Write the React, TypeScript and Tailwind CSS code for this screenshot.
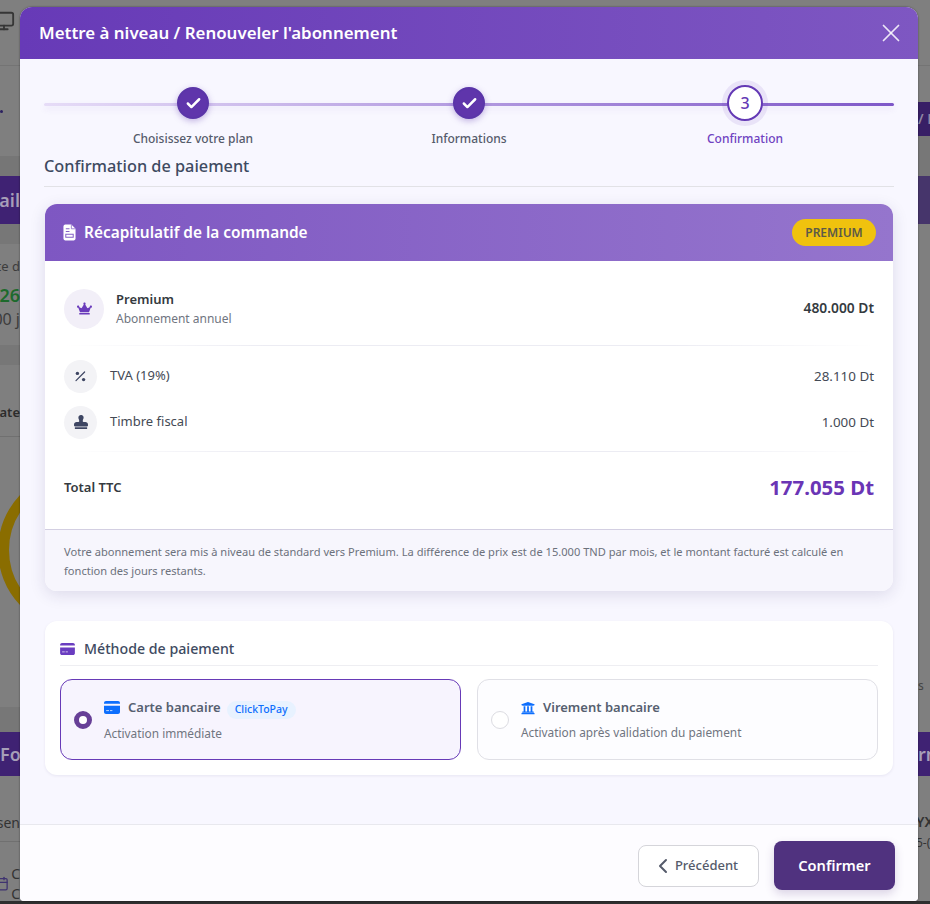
import { Check, ChevronLeft, Monitor, Calendar, X } from 'lucide-react';
import { FaCrown, FaStamp, FaUniversity } from 'react-icons/fa';

const font = "font-['Noto_Sans','Open_Sans',sans-serif]";

function DocIcon() {
  return (
    <svg width="13" height="17" viewBox="0 0 14 18" fill="none">
      <path d="M2.5 0.5H9L13.5 5V15.5C13.5 16.6 12.6 17.5 11.5 17.5H2.5C1.4 17.5 0.5 16.6 0.5 15.5V2.5C0.5 1.4 1.4 0.5 2.5 0.5Z" fill="#fff" />
      <path d="M3 5H7M3 8H7M3 11H11V14H3V11Z" stroke="#8460c6" strokeWidth="1.1" />
      <path d="M9 0.5V5H13.5" stroke="#8460c6" strokeWidth="0.8" />
    </svg>
  );
}

function CardIcon({ className, w, h }: { className: string; w: number; h: number }) {
  return (
    <svg width={w} height={h} viewBox="0 0 16 13" className={className}>
      <path d="M2 0H14C15.1 0 16 .9 16 2V2.8H0V2C0 .9.9 0 2 0Z" fill="currentColor" />
      <path d="M0 4.8H16V11C16 12.1 15.1 13 14 13H2C.9 13 0 12.1 0 11V4.8Z" fill="currentColor" />
      <path d="M2.2 9.6H5M6 9.6H8.4" stroke="#fff" strokeOpacity="0.8" strokeWidth="0.9" />
    </svg>
  );
}

function PercentIcon() {
  return (
    <svg width="11" height="11" viewBox="0 0 11 11" fill="currentColor">
      <circle cx="2.4" cy="2.4" r="1.7" />
      <circle cx="8.6" cy="8.6" r="1.7" />
      <path d="M9.6 1L1 9.6" stroke="currentColor" strokeWidth="1.2" strokeLinecap="round" />
    </svg>
  );
}

function Step({ label, done, num }: { label: string; done?: boolean; num?: number }) {
  return (
    <div className="flex flex-1 flex-col items-center">
      <div className="flex h-9 items-center justify-center">
        {done ? (
          <div className="flex h-8 w-8 items-center justify-center rounded-full border-2 border-[#5a35a8] bg-[#5f35ab] text-white shadow-[0_2px_6px_rgba(90,50,170,0.35)]">
            <Check size={17} strokeWidth={3.5} />
          </div>
        ) : (
          <div className="flex h-9 w-9 items-center justify-center rounded-full border-2 border-[#6439b5] bg-white text-base font-medium text-[#6439b5] shadow-[0_0_0_5px_rgba(103,58,183,0.1)]">
            {num}
          </div>
        )}
      </div>
      <span className={`mt-[10px] text-xs leading-4 font-medium ${done ? 'text-[#555b6b]' : 'text-[#6f42c1]'}`}>{label}</span>
    </div>
  );
}

function Stepper() {
  return (
    <div className="relative h-[70px]">
      <div className="absolute left-0 right-0 top-[18px] h-[3px] rounded-full bg-[linear-gradient(90deg,#e6dcf7,#7e57c8)] shadow-[0_3px_6px_rgba(103,58,183,0.1)]" />
      <div className="relative flex px-[11px]">
        <Step label="Choisissez votre plan" done />
        <Step label="Informations" done />
        <Step label="Confirmation" num={3} />
      </div>
    </div>
  );
}

function FeeRow({ icon, label, amount }: { icon: React.ReactNode; label: string; amount: string }) {
  return (
    <div className="flex h-[34px] items-center justify-between">
      <div className="flex items-center gap-[13px]">
        <div className="flex h-[33px] w-[33px] items-center justify-center rounded-full bg-[#f3f3f6] text-[#3e4663]">{icon}</div>
        <span className="text-[13px] text-[#444a55]">{label}</span>
      </div>
      <span className="text-[13.4px] text-[#444a55]">{amount}</span>
    </div>
  );
}

function Summary() {
  return (
    <div className="mx-px mt-[17px] overflow-hidden rounded-xl bg-white shadow-[0_4px_16px_rgba(40,30,90,0.13)]">
      <div className="flex h-[57px] items-center justify-between bg-[linear-gradient(90deg,#7e57c2,#9575cd)] pl-[18px] pr-[17px] text-white">
        <div className="flex items-center gap-[8px]">
          <DocIcon />
          <span className="mt-px text-[15.4px] font-semibold">Récapitulatif de la commande</span>
        </div>
        <span className="flex h-[27px] w-[84px] items-center justify-center rounded-full bg-[#f0c20e] text-xs font-semibold text-[#5c5a48]">PREMIUM</span>
      </div>
      <div className="px-[19px] pt-[27px]">
        <div className="flex items-center justify-between">
          <div className="flex items-center gap-[12px]">
            <div className="flex h-10 w-10 items-center justify-center rounded-full bg-[#f2eff8] text-[#6a3bbb]">
              <FaCrown size={15} />
            </div>
            <div className="mt-0.5 flex flex-col">
              <span className="text-[13px] font-semibold leading-[18px] text-[#343a40]">Premium</span>
              <span className="text-xs leading-[21px] text-[#70757f]">Abonnement annuel</span>
            </div>
          </div>
          <span className="text-[13.8px] font-semibold text-[#343a40]">480.000 Dt</span>
        </div>
        <div className="mt-[16px] h-px bg-[linear-gradient(90deg,transparent,#ececf3_25%,#ececf3_75%,transparent)]" />
        <div className="mt-[13px] flex flex-col gap-3">
          <FeeRow icon={<PercentIcon />} label="TVA (19%)" amount="28.110 Dt" />
          <FeeRow icon={<FaStamp size={14} />} label="Timbre fiscal" amount="1.000 Dt" />
        </div>
        <div className="mt-[12px] h-px bg-[linear-gradient(90deg,transparent,#ececf3_25%,#ececf3_75%,transparent)]" />
        <div className="flex h-[71px] items-center justify-between">
          <span className="text-[13px] font-semibold text-[#343a40]">Total TTC</span>
          <span className="text-[20.4px] font-bold text-[#6a35b5]">177.055 Dt</span>
        </div>
      </div>
      <div className="mt-[6px] border-t border-[#d3cfe2] bg-[#f7f6fd] px-[19px] pb-[11px] pt-[12px] text-[11.1px] leading-[19px] text-[#6c717c]">
        Votre abonnement sera mis à niveau de standard vers Premium. La différence de prix est de 15.000 TND par mois, et le montant facturé est calculé en fonction des jours restants.
      </div>
    </div>
  );
}

function PayOption({ selected, icon, title, badge, sub }: { selected?: boolean; icon: React.ReactNode; title: string; badge?: string; sub: string }) {
  return (
    <div className={`flex h-[81px] flex-1 items-center rounded-xl border pl-[13px] ${selected ? 'border-[#673ab7] bg-[#f7f4fe]' : 'border-[#e0e0e6] bg-[#fdfdff]'}`}>
      {selected ? (
        <div className="h-[18px] w-[18px] rounded-full border-[5px] border-[#673f97] bg-white" />
      ) : (
        <div className="h-[18px] w-[18px] rounded-full border border-[#dcdce2] bg-white" />
      )}
      <div className="ml-3 flex flex-col gap-[6px]">
        <div className="flex items-center gap-2 text-[13px] font-semibold text-[#566070]">
          <span className="text-[#0d6efd]">{icon}</span>
          <span>{title}</span>
          {badge && <span className="-ml-0.5 mt-1 rounded-full bg-[#e8f2ff] px-2 py-px text-[10.5px] font-medium text-[#0d6efd]">{badge}</span>}
        </div>
        <span className="text-[11.85px] text-[#70757f]">{sub}</span>
      </div>
    </div>
  );
}

// dimmed page behind the dialog, only its edges show
function LeftEdge() {
  return (
    <div className="flex h-full w-5 flex-col overflow-hidden text-[#3c3c3c]">
      <div className="flex h-[66px] shrink-0 items-start border-b border-[#747474]">
        <Monitor size={22} className="-ml-[7px] mt-[10px] shrink-0 text-[#363636]" />
      </div>
      <div className="flex h-[90px] shrink-0 items-center">
        <div className="h-[3px] w-[3px] rounded-full bg-[#2b2060]" />
      </div>
      <div className="h-5 shrink-0 bg-[#767676]" />
      <div className="flex h-[48px] shrink-0 items-center justify-end whitespace-nowrap bg-[#3f2273] text-lg font-semibold text-[#a79fb8]">tail</div>
      <div className="h-[20px] shrink-0 bg-[#777777]" />
      <div className="flex h-[101px] shrink-0 flex-col items-end whitespace-nowrap">
        <span className="mt-[13px] text-[13px] leading-[18px]">te d</span>
        <span className="mt-[6px] text-lg font-semibold leading-[28px] text-[#1d6a2c]">026</span>
        <span className="-mt-[3px] text-base leading-[26px]">00 j</span>
      </div>
      <div className="h-5 shrink-0 bg-[#777777]" />
      <div className="flex h-[72px] shrink-0 items-end justify-end whitespace-nowrap border-b border-[#707070] pb-[14px] text-[13px] font-semibold text-[#2c2c2c]">sate</div>
      <div className="h-[270px] shrink-0 overflow-hidden">
        <svg width="20" height="270" viewBox="0 0 20 270">
          <circle cx="78" cy="113" r="74.5" fill="none" stroke="#8a6d00" strokeWidth="11" />
        </svg>
      </div>
      <div className="h-[25px] shrink-0 bg-[#777777]" />
      <div className="flex h-[44px] shrink-0 items-center whitespace-nowrap bg-[#3f2273] text-lg font-semibold text-[#a79fb8]">Fo</div>
      <div className="flex h-[66px] shrink-0 items-center justify-end whitespace-nowrap border-b border-[#707070] pt-[28px] text-sm text-[#333333]">sen</div>
      <div className="flex flex-1 items-start justify-between">
        <Calendar size={15} className="-ml-[6px] mt-[34px] shrink-0 text-[#3f3370]" />
        <span className="mt-[22px] text-sm leading-[20px] text-[#333333]">C<br />C</span>
      </div>
    </div>
  );
}

function RightEdge() {
  return (
    <div className="flex h-full w-3 flex-col overflow-hidden whitespace-nowrap text-[#333333]">
      <div className="h-[66px] shrink-0 border-b border-[#747474]" />
      <div className="h-[36px] shrink-0" />
      <div className="flex h-[34px] shrink-0 items-center bg-[#381f66] text-sm font-semibold text-[#8f86a3]">/ F</div>
      <div className="h-10 shrink-0 bg-[#777777]" />
      <div className="h-[48px] shrink-0 bg-[#46356b]" />
      <div className="h-[454px] shrink-0" />
      <div className="flex h-[54px] shrink-0 items-start text-xs text-[#444444]">s</div>
      <div className="flex h-[44px] shrink-0 items-center bg-[#3f2273] text-lg font-semibold text-[#a79fb8]">rn</div>
      <div className="flex flex-1 flex-col pt-[33px] text-sm leading-[26px]">
        <span className="-ml-0.5 font-semibold">YX</span>
        <span className="-ml-0.5 text-xs">5-(</span>
      </div>
    </div>
  );
}

export default function App() {
  return (
    <div className={`relative h-[904px] w-[930px] overflow-hidden ${font}`}>
      <div className="flex h-[904px] w-[930px] flex-col bg-[#7f7f7f]">
        <div className="flex h-[901px] justify-between">
          <LeftEdge />
          <RightEdge />
        </div>
        <div className="h-[3px] bg-[#2f2f2f]" />
      </div>
      <div className="absolute left-[20px] top-[7px] flex h-[894px] w-[898px] flex-col overflow-hidden rounded-t-xl rounded-b-[4px] bg-[#f8f7ff] shadow-[0_0_2px_rgba(0,0,0,0.5)]">
        <div className="flex h-[52px] shrink-0 items-center justify-between bg-[linear-gradient(90deg,#673ab7,#7e57c2)] pl-[19px] pr-[12px] text-white">
          <h2 className="text-[16.9px] font-semibold">Mettre à niveau / Renouveler l'abonnement</h2>
          <X size={30} strokeWidth={1.4} className="text-white/85" />
        </div>
        <div className="flex-1 px-[24px] pt-[26px]">
          <Stepper />
          <div className="text-[16.3px] font-medium leading-[22px] text-[#3e4a61]">Confirmation de paiement</div>
          <div className="mt-[9px] h-px bg-[#e2e2e6]" />
          <Summary />
          <div className="mx-px mt-[30px] rounded-xl bg-white px-[15px] pb-[15px] pt-[17px] shadow-[0_1px_3px_rgba(40,30,90,0.08)]">
            <div className="flex items-center gap-[9px] border-b border-[#eeeef2] pb-[6px] text-[14.2px] font-medium text-[#3e4a61]">
              <CardIcon className="text-[#6a3dc0]" w={15} h={12} />
              <span>Méthode de paiement</span>
            </div>
            <div className="mt-[13px] flex gap-4">
              <PayOption selected icon={<CardIcon className="text-[#0d6efd]" w={16} h={13} />} title="Carte bancaire" badge="ClickToPay" sub="Activation immédiate" />
              <PayOption icon={<FaUniversity size={14} />} title="Virement bancaire" sub="Activation après validation du paiement" />
            </div>
          </div>
        </div>
        <div className="flex h-[77px] shrink-0 items-start justify-end gap-[15px] border-t border-[#e8e8ee] bg-[#fdfcff] pr-[23px] pt-[16px]">
          <button className="mt-[4px] flex h-[42px] w-[121px] items-center justify-center rounded-lg border border-[#d5d5da] bg-white text-[13px] font-medium text-[#555b6b]">
            <ChevronLeft size={24} strokeWidth={2} className="-ml-2" />
            <span>Précédent</span>
          </button>
          <button className="h-[49px] w-[121px] rounded-lg bg-[#50327f] text-[14.6px] font-semibold text-white shadow-[0_4px_10px_rgba(80,50,127,0.2)]">Confirmer</button>
        </div>
      </div>
    </div>
  );
}
